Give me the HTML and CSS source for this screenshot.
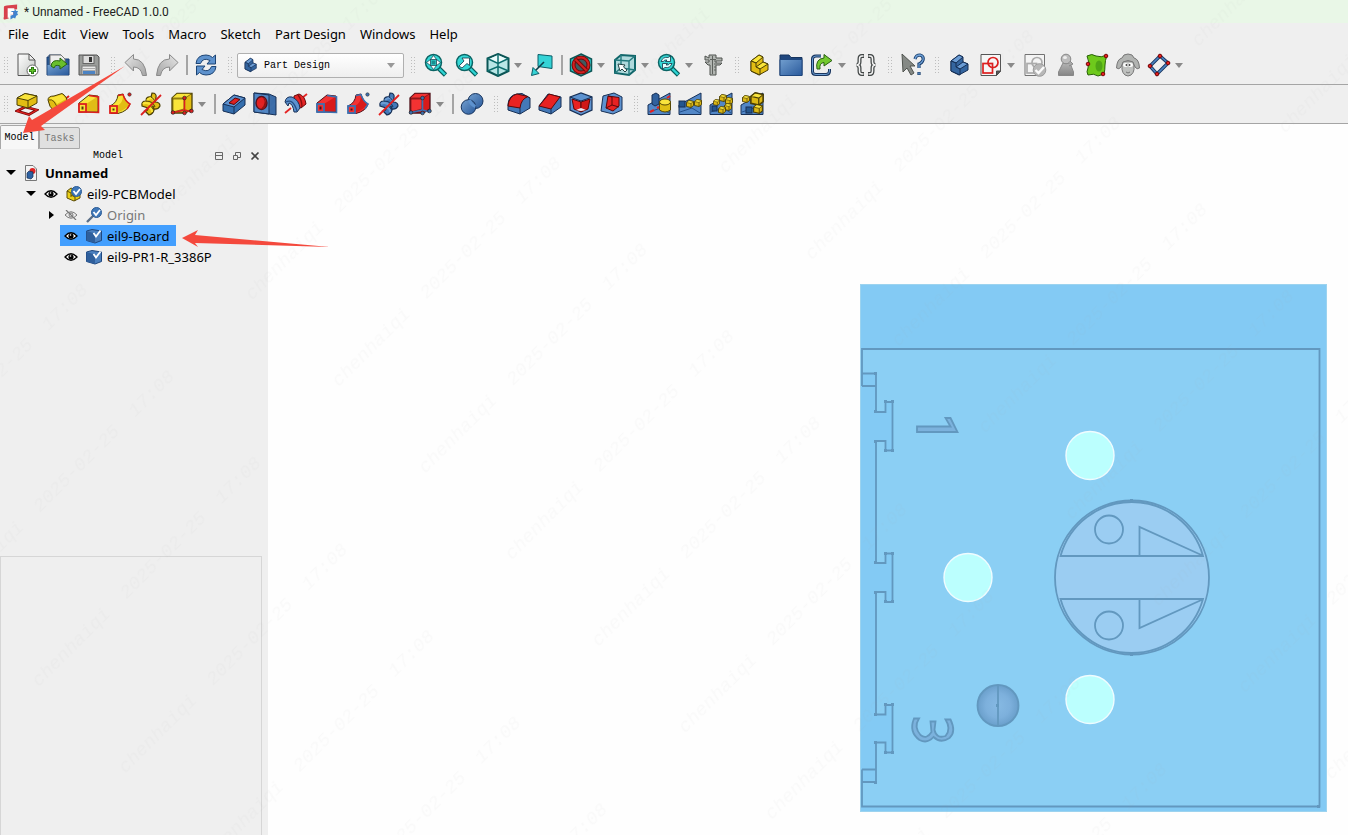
FILE: index.html
```html
<!DOCTYPE html>
<html lang="en">
<head>
<meta charset="utf-8">
<title>* Unnamed - FreeCAD 1.0.0</title>
<link rel="stylesheet" href="styles.css">
</head>
<body>
<svg class="defs" aria-hidden="true">
  <defs>
    <linearGradient id="gGrey" x1="0" y1="0" x2="1" y2="1"><stop offset="0" stop-color="#fff"/><stop offset="1" stop-color="#c4c7c4"/></linearGradient>
    <linearGradient id="gArrow" x1="0" y1="0" x2="1" y2="1"><stop offset="0" stop-color="#e6e6e6"/><stop offset="1" stop-color="#a4a4a4"/></linearGradient>
    <linearGradient id="gBlue" x1="0" y1="0" x2="1" y2="1"><stop offset="0" stop-color="#729fcf"/><stop offset="1" stop-color="#2a5a9c"/></linearGradient>
    <linearGradient id="gShade" x1="0" y1="0" x2="0" y2="1"><stop offset="0" stop-color="#b4b4b4"/><stop offset="1" stop-color="#858585"/></linearGradient>
    <radialGradient id="gKnob"><stop offset="0" stop-color="#86b9e3"/><stop offset=".6" stop-color="#7db0dc"/><stop offset="1" stop-color="#6a9fcb"/></radialGradient>
    <pattern id="watermark" width="424.26" height="122.47" patternUnits="userSpaceOnUse" patternTransform="translate(460 255) rotate(-45) translate(-212 -61)">
      <g class="watermark-text">
        <text x="84" y="69">chenhaiqi</text><text x="214" y="69">2025-02-25</text><text x="320" y="69">17:08</text>
      </g>
    </pattern>
  </defs>

  <symbol id="logo" viewBox="0 0 18 18"><path d="M2 4Q2 2 5 2L16 1V6L8 7V9L13 9V12L8 12L7 16L3 17Q1 17 2 14Z" fill="#d8414b"/><path d="M6 5H13V8H9V9H12V12H9V15H6Z" fill="#fff"/><path d="M14 6L15 8L17 8L16 10L17 12L15 13L14 16L12 15L9 17L9 13L12 12V9H10V8L13 8Z" fill="#3e83d0"/></symbol>
  <symbol id="new" viewBox="0 0 24 24"><path d="M3 1H14L20 7V22.500H3Z" fill="url(#gGrey)" stroke="#555"/><path d="M14 1V7H20Z" fill="#eee" stroke="#555"/><circle cx="17.500" cy="17.500" r="5.500" fill="#fff" stroke="#666"/><path d="M17.500 14V21M14 17.500H21" stroke="#256b12" stroke-width="3"/><path d="M17.500 14.700V20.300M14.700 17.500H20.300" stroke="#63c52a" stroke-width="1.300"/></symbol>
  <symbol id="open" viewBox="0 0 24 24"><path d="M1 4H3V2H15L19 6H23V22H1Z" fill="#2a5a94" stroke="#1c3f70"/><path d="M4 2H15L19 6V14H4Z" fill="#eee" stroke="#777"/><rect x="1.500" y="12" width="21" height="10" fill="url(#gBlue)"/><path d="M5 13Q6 6 14 8V5L21 11L14 16V13Q9 11 8 15Z" fill="#69bf2c" stroke="#28650f"/></symbol>
  <symbol id="save" viewBox="0 0 24 24"><path d="M2 2H20L22 4V22H2Z" fill="#9a9c9a" stroke="#555"/><rect x="6" y="2.500" width="11" height="8" fill="#dcdcdc" stroke="#666"/><rect x="12" y="4" width="3" height="5" fill="#333"/><rect x="5" y="13" width="14" height="8.500" fill="#e8e8e8" stroke="#777"/><path d="M6 15.500H18M6 17.500H18" stroke="#aaa"/><rect x="6" y="18" width="12" height="3" fill="#4c83c3"/></symbol>
  <symbol id="undo" viewBox="0 0 24 24"><path d="M1 9.500L9.500 1.500V6Q21 6 22.500 22.500H18.500Q17 14 9.500 14V18Z" fill="url(#gArrow)" stroke="#8a8a8a"/></symbol>
  <symbol id="refresh" viewBox="0 0 24 24"><path id="ref" d="M2 10.500Q3 2 12 2Q16 2 18.500 4.500L21.500 2V11H13L16 7.500Q9 4 6.500 10.500Z" fill="#5e92cd" stroke="#1c4474"/><use href="#ref" transform="rotate(180 12 12)"/></symbol>
  <symbol id="body" viewBox="0 0 24 24"><path d="M3 8L11 2L15 4V9L20 11V17L11 22L3 18Z" fill="var(--m)" stroke="var(--d)"/><path d="M3 8L11 2L15 4L8 10ZM8 14L15 9L20 11L12 16Z" fill="var(--f)" stroke="var(--d)"/><path d="M8 10V14L12 16V22L3 18V8Z" fill="var(--m)" stroke="var(--d)"/></symbol>
  <symbol id="lens" viewBox="0 0 24 24"><path d="M14.500 15L21.500 22" stroke="#07605f" stroke-width="4.600"/><path d="M15 15.500L21 21.500" stroke="#2fd5d4" stroke-width="2.400"/><circle cx="9.500" cy="9.500" r="8" fill="#35d8d6" stroke="#0a6464" stroke-width="1.500"/></symbol>
  <symbol id="fit" viewBox="0 0 24 24"><use href="#lens"/><path d="M9.500 2.500L12.500 6.500H6.500ZM9.500 16.500L12.500 12.500H6.500ZM2.500 9.500L6.500 6.500V12.500ZM16.500 9.500L12.500 6.500V12.500Z" fill="#fff" stroke="#134" stroke-width=".7"/><rect x="7.500" y="7.500" width="4" height="4" fill="#188f90"/></symbol>
  <symbol id="fitsel" viewBox="0 0 24 24"><use href="#lens"/><path d="M4 13L9 8L7 5H14.500V12.500L12 10.500L7 15Z" fill="#fff" stroke="#134" stroke-width=".8"/></symbol>
  <symbol id="zoomv" viewBox="0 0 24 24"><use href="#lens"/><path id="zv" d="M4 8.500Q6 3.500 11 4.500L13.500 3V8.500H8.500L10 7Q7 6.500 6.500 8.500Z" fill="#e6ffff" stroke="#134" stroke-width=".8"/><use href="#zv" transform="rotate(180 9.500 9.500)"/></symbol>
  <symbol id="iso" viewBox="0 0 24 24"><path d="M12 1L22.500 5.500V18L12 23L1.500 18V5.500Z" fill="#b9e6e6" stroke="#0b5555" stroke-width="2"/><path d="M12 2L21 6L12 10L3 6Z" fill="#e9fbfb"/><path d="M1.500 5.500L12 10.500L22.500 5.500M12 10.500V23M1.500 18L12 13.500L22.500 18M12 1V10" fill="none" stroke="#0c6d6d" stroke-width="1.500"/></symbol>
  <symbol id="align" viewBox="0 0 24 24"><path d="M8 1.500L22 3V15.500L8 13.500Z" fill="#35d3d6" stroke="#0b5c66"/><path d="M14 9L5 18" stroke="#0b3f4a" stroke-width="1.600"/><path d="M1.500 22.500L3 14.500L9 20.500Z" fill="#35d3d6" stroke="#0b5c66"/></symbol>
  <symbol id="nobox" viewBox="0 0 24 24"><path d="M12 1L22.500 6V18L12 23L1.500 18V6Z" fill="#2fcfd0" stroke="#0b5555" stroke-width="1.500"/><circle cx="12" cy="12" r="7.500" fill="#3d5c60" stroke="#730b0b" stroke-width="4"/><circle cx="12" cy="12" r="7.500" fill="none" stroke="#d42020" stroke-width="2"/><path d="M6.500 6.500L17.500 17.500" stroke="#730b0b" stroke-width="4"/><path d="M6.500 6.500L17.500 17.500" stroke="#d42020" stroke-width="2"/></symbol>
  <symbol id="cubesel" viewBox="0 0 24 24"><path d="M2 7L8 2L22 3V17L16 22L2 20Z" fill="#afd9dc" stroke="#11666a" stroke-width="2"/><path d="M2 7L16 8L22 3M16 8V22M8 2V15L2 20M8 15L22 17" fill="none" stroke="#247b7e" stroke-width="1.400"/><path d="M5 11L12 12L10.500 14L14 17L12 19L9 16L7 18Z" fill="#fff" stroke="#244"/></symbol>
  <symbol id="caliper" viewBox="0 0 24 24"><path d="M4 3L8 5V2H15V5H21V8H15V10H21L19 12H15V22H9V12H7L4 9H8V7H4Z" fill="#b2b6b2" stroke="#4f534f"/><path d="M11.500 3V21M13 8H15M13 11H15M13 14H15M13 17H15M9 6.500H15" stroke="#5e625e"/></symbol>
  <symbol id="folder" viewBox="0 0 24 24"><path d="M1 2H10L12 4.500H23V22.500H1Z" fill="#1f477e" stroke="#17345e"/><path d="M1 6.500H23V22.500H1Z" fill="url(#gBlue)" stroke="#1f477e"/></symbol>
  <symbol id="export" viewBox="0 0 24 24"><path d="M11 3H6Q2.500 3 2.500 6V18.500Q2.500 21.500 6 21.500H16Q19.500 21.500 19.500 18V16" fill="none" stroke="#17345e" stroke-width="3"/><path d="M11 3H6Q2.500 3 2.500 6V18.500Q2.500 21.500 6 21.500H16Q19.500 21.500 19.500 18V16" fill="none" stroke="#6a9bd0"/><path d="M7 16Q5 6 14 5V1.500L22 7.500L14 13V9.500Q9 10 10 16Z" fill="#72c92d" stroke="#275e0f"/></symbol>
  <symbol id="braces" viewBox="0 0 24 24"><g id="br" fill="none"><path d="M10 3H8Q5.500 3 5.500 6V9Q5.500 11.500 3 12Q5.500 12.500 5.500 15V18Q5.500 21 8 21H10" stroke="#3f4444" stroke-width="4"/><path d="M9.500 3H8Q5.500 3 5.500 6V9Q5.500 11.500 3 12Q5.500 12.500 5.500 15V18Q5.500 21 8 21H9.500" stroke="#f2f2f2" stroke-width="1.500"/></g><use href="#br" transform="matrix(-1 0 0 1 24 0)"/></symbol>
  <symbol id="whats" viewBox="0 0 24 24"><path d="M1 1L14 13H9L13 20L10 22L6 15L2 19Z" fill="#858985" stroke="#50544f"/><path d="M14 6Q15 2 19 2Q23 3 22 7Q21 10 18 11V15M18 19V22" fill="none" stroke="#173d6c" stroke-width="3.200"/><path d="M14 6Q15 2 19 2Q23 3 22 7Q21 10 18 11V15M18 19.500V21.500" fill="none" stroke="#6fa0d6" stroke-width="1.300"/></symbol>
  <symbol id="sketch" viewBox="0 0 24 24"><path d="M2 1.500H21.500V18L17.500 22.500H2Z" fill="#f6f6f6" stroke="#555"/><path d="M17.500 22.500V18H21.500Z" fill="#555" stroke="#444"/><rect x="4" y="10.500" width="9.500" height="9.500" fill="none" stroke="var(--g)" stroke-width="1.700"/><circle cx="14" cy="9.500" r="5" fill="none" stroke="var(--g)" stroke-width="1.700"/></symbol>
  <symbol id="validate" viewBox="0 0 24 24"><use href="#sketch"/><circle cx="16.500" cy="17" r="6.300" fill="#aaa" stroke="#888"/><path d="M12.500 17L15.500 20L21 14" fill="none" stroke="#fff" stroke-width="2.400"/></symbol>
  <symbol id="pawn" viewBox="0 0 24 24"><path d="M9 10H16L19.500 19V22.500H4.500V19Z" fill="url(#gShade)" stroke="#888"/><circle cx="12" cy="6" r="4.800" fill="#bcbcbc" stroke="#888"/><ellipse cx="11" cy="4.500" rx="2" ry="1.500" fill="#eee"/><path d="M16 8L19 11L15 13" fill="#aaa" stroke="#888"/></symbol>
  <symbol id="surface" viewBox="0 0 24 24"><path d="M2 3Q7 0 11 3Q16 5 22 2Q20 8 20 12Q20 17 19 21L13 23Q9 20 3 22Q1 19 3 15Q5 9 2 3Z" fill="#6ec91c" stroke="#286007"/><ellipse cx="14" cy="13" rx="3.500" ry="5.500" fill="#4fa516"/><g fill="#e32020" stroke="#7a0606"><circle cx="21" cy="3" r="1.800"/><circle cx="3" cy="11" r="1.800"/><circle cx="18" cy="21" r="1.800"/></g></symbol>
  <symbol id="sheep" viewBox="0 0 24 24"><path d="M7 8Q4 18 9 22Q12 24 15 22Q20 18 17 8Z" fill="#bfc1bf" stroke="#777"/><path d="M6 5Q7 1 12 1Q17 1 18 5Q23 6 23.500 15Q21 17 19 14L17 9Q12 6 7 9L5 14Q3 17 .5 15Q1 6 6 5Z" fill="#b2b4b2" stroke="#777"/><ellipse cx="9.500" cy="12" rx="2.500" ry="2" fill="#fff"/><ellipse cx="14.500" cy="12" rx="2.500" ry="2" fill="#fff"/><circle cx="10.500" cy="12" r="1" fill="#444"/><circle cx="13.500" cy="12" r="1" fill="#444"/><path d="M10 19Q12 21 14 19" fill="none" stroke="#777"/></symbol>
  <symbol id="diamond" viewBox="0 0 24 24"><path d="M13 3L21 10L10 21L3 13Z" fill="none" stroke="#17345e" stroke-width="3.400"/><path d="M13 3L21 10L10 21L3 13Z" fill="none" stroke="#4b83c2" stroke-width="1.600"/><g fill="#e32020" stroke="#7a0606"><circle cx="13" cy="3" r="1.800"/><circle cx="21" cy="10" r="1.800"/><circle cx="10" cy="21" r="1.800"/><circle cx="3" cy="13" r="1.800"/></g></symbol>

  <symbol id="pad" viewBox="0 0 24 24"><path d="M2 19L10 15L22 18L14 22.500Z" fill="none" stroke="#6f0a0a" stroke-width="2.600"/><path d="M2 19L10 15L22 18L14 22.500Z" fill="none" stroke="#e02020" stroke-width="1.200"/><path d="M2 6L10 1.500L22 4V11L13 16L2 13Z" fill="var(--m)" stroke="var(--d)"/><path d="M2 6L10 1.500L22 4L13 8.500Z" fill="var(--f)" stroke="var(--d)"/><path d="M13 8.500V16" stroke="var(--d)"/></symbol>
  <symbol id="revolve" viewBox="0 0 24 24"><path d="M1 22L23 4" stroke="var(--g)" stroke-width="2"/><path d="M2 8Q2 4 8 4L16 1.500Q21 4 22 12L13 19Q11 22 8 19Q3 15 2 8Z" fill="var(--m)" stroke="var(--d)"/><path d="M3 7Q4 4.500 8 5L16 2.500Q18 4 20 7L11 12Q8 7 3 7Z" fill="var(--f)"/><path d="M2.500 8Q9 6 12 19" fill="none" stroke="var(--d)" stroke-width=".8"/></symbol>
  <symbol id="loft" viewBox="0 0 24 24"><path d="M2 11L12 3L21 4V20H2Z" fill="var(--f)" stroke="var(--d)"/><path d="M9 12L20 5V19H9Z" fill="var(--m)"/><path d="M12 3.500L21.500 5V20.500L9 20" fill="none" stroke="var(--g)" stroke-width="1.600"/><rect x="2" y="12" width="7" height="8" fill="var(--f)" stroke="var(--g)" stroke-width="1.800"/><rect x="4.500" y="14.500" width="2" height="3" fill="var(--d)"/></symbol>
  <symbol id="pipe" viewBox="0 0 24 24"><path d="M2 14Q9 11 10 3L15 2Q17 10 22 12Q20 19 10 21.500H3Z" fill="var(--f)" stroke="var(--d)"/><path d="M9 14Q15 11 15 4Q17 9 21 12Q18 18 9 20.500Z" fill="var(--m)"/><path d="M10 3.500L15 2.500Q17 9 22 12L19 17" fill="none" stroke="var(--g)" stroke-width="1.500"/><rect x="2" y="14" width="7" height="7" fill="var(--f)" stroke="var(--g)" stroke-width="1.800"/><rect x="4.500" y="16.500" width="2" height="2" fill="var(--d)"/><circle cx="21.500" cy="2.500" r="1.700" fill="var(--g)" stroke="#333" stroke-width=".6"/></symbol>
  <symbol id="helix" viewBox="0 0 24 24"><path d="M13 1Q18 1 17 6L16 10Q21 10 21 14Q19 18 14 17L12 14Q15 13 15 18Q14 22 10 23L6 19Q9 19 9 16L3 14Q2 9 7 9Q7 4 12 5Z" fill="var(--m)" stroke="var(--d)" stroke-width="1.200"/><path d="M8 9Q9 6 13 6Q15 6 15 9M4 12Q8 9 13 14M10 16Q13 16 13 20" fill="none" stroke="var(--f)" stroke-width="2"/><path d="M7 9Q14 9 16 15M12 5Q15 6 16 10" fill="none" stroke="var(--d)"/><path d="M2 23L22 3" stroke="var(--g)" stroke-width="1.800"/></symbol>
  <symbol id="prim" viewBox="0 0 24 24"><path d="M2 6L7 1.500H22V17L15 21H2Z" fill="var(--m)" stroke="var(--d)" stroke-width="1.300"/><path d="M2 6L7 1.500H22L15 6ZM3 7H14V17L3 20Z" fill="var(--f)" stroke="var(--d)" stroke-width=".6"/><path d="M14.500 6V18L3 20.500M15 18L21 20" fill="none" stroke="var(--g)" stroke-width="1.600"/><g fill="var(--g)" stroke="#222" stroke-width=".7"><circle cx="14.500" cy="6" r="1.800"/><circle cx="3" cy="20.500" r="1.800"/><circle cx="14.500" cy="21" r="1.800"/><circle cx="21.500" cy="19" r="1.800"/></g></symbol>
  <symbol id="pocket" viewBox="0 0 24 24"><path d="M1 12L12 3L23 6V13L12 22L1 19Z" fill="#356ead" stroke="#162f55"/><path d="M1 12L12 3L23 6L12 15Z" fill="#5d92cf" stroke="#162f55"/><path d="M7 11L13 6L18 7.500L12 12.500Z" fill="#e02020" stroke="#560909"/><path d="M12 15V22" stroke="#162f55"/></symbol>
  <symbol id="hole" viewBox="0 0 24 24"><path d="M1 1L16 2L23 5V23L16 22L1 20Z" fill="#3b6ca8" stroke="#162f55"/><path d="M1 1L16 3V22L1 20Z" fill="#5186c4" stroke="#162f55"/><ellipse cx="8.500" cy="11" rx="5.500" ry="6.500" fill="#e42020" stroke="#54101d" stroke-width="1.400"/><path d="M10 6Q14 11 8 17Q13 18 13 11Q13 7 10 6Z" fill="#8f1010"/></symbol>
  <symbol id="groove" viewBox="0 0 24 24"><path d="M1 21L7 16M18 6L23 2" stroke="#e52525" stroke-width="1.800"/><path d="M10 4L15 2Q21 4 22 12L17 16L10 13Z" fill="#e52525" stroke="#650909"/><path d="M14 3Q18 8 18 15" fill="none" stroke="#8c0d0d" stroke-width="1.400"/><path d="M1 10Q2 4 8 5Q15 8 16 16L13 20H10Q9 12 5 11L4 14Z" fill="#5d92cf" stroke="#162f55"/><path d="M2 10Q9 6 13 19" fill="none" stroke="#264f86" stroke-width="1.300"/></symbol>
  <symbol id="boolean" viewBox="0 0 24 24"><circle cx="15.500" cy="9" r="7.500" fill="url(#gBlue)" stroke="#17345e"/><circle cx="8.500" cy="15" r="7.300" fill="url(#gBlue)" stroke="#17345e"/><path d="M9.500 8Q11 13 15.500 14.500" fill="none" stroke="#5d92cf" stroke-width="3"/></symbol>
  <symbol id="fillet" viewBox="0 0 24 24"><path d="M1 18V12Q2 3 10 2L15 1.500L23 6V16L13 22Z" fill="#4479b8" stroke="#162f55"/><path d="M1 14Q2 4 10 2L21 4.500Q14 7 13 16Z" fill="#e82222" stroke="#5c0808"/><path d="M13 16L13 22M21 5L23 6" stroke="#162f55"/></symbol>
  <symbol id="chamfer" viewBox="0 0 24 24"><path d="M1 18V14L10 2L23 5V15L13 22Z" fill="#4479b8" stroke="#162f55"/><path d="M1 14L11 2L22 5L13 17Z" fill="#e82222" stroke="#5c0808"/><path d="M13 17V22" stroke="#162f55"/></symbol>
  <symbol id="draft" viewBox="0 0 24 24"><path d="M1 5L12 1L23 5V18L12 23L1 18Z" fill="#5d92cf" stroke="#162f55" stroke-width="1.200"/><path d="M3 7L12 10V20L5 17Z" fill="#e82222" stroke="#5c0808"/><path d="M21 7L12 10V20L19 17Z" fill="#d01818" stroke="#5c0808"/><path d="M1 5L12 9L23 5" fill="none" stroke="#162f55"/><path d="M12 19L7 18L12 16L17 18Z" fill="#e8f0fc"/></symbol>
  <symbol id="thickness" viewBox="0 0 24 24"><path d="M3 4L14 1L22 5V18L13 22L1 19Z" fill="#5d92cf" stroke="#162f55"/><path d="M8 4L19 5.500V14L13 19L6 16Z" fill="#e82222" stroke="#5c0808"/><path d="M8 4L12 5V13L6 16M12 13L19 15" fill="none" stroke="#5c0808"/></symbol>
  <symbol id="wedge" viewBox="0 0 24 24"><path d="M1 13L23 1V22.500H1Z" fill="#5287c7" stroke="#162f55"/><path d="M2 20L14 16L22 21" fill="none" stroke="#23508c"/></symbol>
  <symbol id="ybox" viewBox="0 0 8 8"><path d="M.5 2.500L3 .5L7.500 1.500V5.500L5 7.500L.5 6.500Z" fill="#dcb814" stroke="#4b3f06" stroke-width=".9"/><path d="M.5 2.500L3 .5L7.500 1.500L5 3.500Z" fill="#fae43d" stroke="#4b3f06" stroke-width=".6"/><path d="M5 3.500V7.500" stroke="#4b3f06" stroke-width=".7"/></symbol>
  <symbol id="mirror" viewBox="0 0 24 24"><use href="#wedge"/><path d="M5 3L9 1L12 3V12L8 14L5 12Z" fill="#31619d" stroke="#162f55"/><path d="M12.500 10V18Q18 22 23.500 18V10Z" fill="#e0bf15" stroke="#554705"/><ellipse cx="18" cy="10" rx="5.500" ry="3" fill="#fae43d" stroke="#554705"/><path d="M3 20L7 18M10 16L12 15M20 6L23 4" stroke="#e52020" stroke-width="2"/></symbol>
  <symbol id="linear" viewBox="0 0 24 24"><use href="#wedge"/><rect x="1" y="9" width="6" height="6" fill="#24568f" stroke="#162f55"/><use href="#ybox" x="8" y="8" width="8" height="8"/><use href="#ybox" x="16" y="7" width="8" height="8"/></symbol>
  <symbol id="polar" viewBox="0 0 24 24"><use href="#wedge"/><use href="#ybox" x="4" y="7" width="7" height="7"/><use href="#ybox" x="10" y="2" width="8" height="8"/><use href="#ybox" x="16" y="5" width="8" height="8"/><use href="#ybox" x="15" y="11" width="8" height="8"/><use href="#ybox" x="9" y="14" width="8" height="8"/><rect x="3" y="14" width="5" height="5" fill="#24568f" stroke="#162f55"/></symbol>
  <symbol id="multi" viewBox="0 0 24 24"><use href="#wedge"/><use href="#ybox" x="10" y="0" width="14" height="14"/><use href="#ybox" x="2" y="3" width="8" height="8"/><use href="#ybox" x="13" y="12" width="10" height="10"/><rect x="6" y="15" width="6" height="6" fill="#24568f" stroke="#162f55"/></symbol>

  <symbol id="doc" viewBox="0 0 16 16"><path d="M2.500 .5H10L13.500 4V15.500H2.500Z" fill="#f4f4f4" stroke="#777"/><circle cx="9.500" cy="6" r="3" fill="#e02424"/><path d="M4 8L6 6L10 7V12L8 14L4 13Z" fill="#2f62a2" stroke="#162f55" stroke-width=".7"/></symbol>
  <symbol id="check" viewBox="0 0 16 16"><circle cx="10.500" cy="5.500" r="5" fill="#3f78b9" stroke="#2a5a94"/><path d="M7.500 5L10 8L14 3" fill="none" stroke="#fff" stroke-width="1.800"/></symbol>
  <symbol id="tpart" viewBox="0 0 16 16"><path d="M1 5L5 2L9 4V7L14 8V12L8 15L1 12Z" fill="#ead019" stroke="#5c4d06"/><path d="M5 9L9 11V15M1 5L5 7V11" fill="none" stroke="#5c4d06"/><use href="#check"/></symbol>
  <symbol id="torigin" viewBox="0 0 16 16"><path d="M1 15L7 9" stroke="#5a6f88" stroke-width="2.400"/><use href="#check"/></symbol>
  <symbol id="tsolid" viewBox="0 0 16 16"><path d="M.5 3L6 1.500L15.500 3V12.500L9 15L.5 12.500Z" fill="#4a7fbe" stroke="#1f477e"/><path d="M.5 3L9 5.500V15L.5 12.500Z" fill="#2f5f9c"/><path d="M7.500 5L10 8.500L14.500 2.500" fill="none" stroke="#fff" stroke-width="1.800"/></symbol>
  <symbol id="eye" viewBox="0 0 14 10"><path d="M1 5Q7-1.500 13 5Q7 11.500 1 5Z" fill="#fff" stroke="#000" stroke-width="1.300"/><circle cx="7" cy="5" r="2.600" fill="#000"/><circle cx="6.500" cy="4" r=".8" fill="#fff"/></symbol>
  <symbol id="eyeoff" viewBox="0 0 14 10"><path d="M1 5Q7-1.500 13 5Q7 11.500 1 5Z" fill="none" stroke="#777"/><circle cx="7" cy="5" r="2" fill="none" stroke="#777"/><path d="M2 0L12 10" stroke="#777" stroke-width="1.200"/></symbol>
</svg>

<div class="app">
  <header class="titlebar"><svg class="logo"><use href="#logo"/></svg><span>* Unnamed - FreeCAD 1.0.0</span></header>
  <nav class="menubar">
    <button>File</button><button>Edit</button><button>View</button><button>Tools</button><button>Macro</button><button>Sketch</button><button>Part Design</button><button>Windows</button><button>Help</button>
  </nav>

  <div class="toolbar" role="toolbar" aria-label="Main tools">
    <i class="grip"></i>
    <button class="tool" aria-label="New"><svg><use href="#new"/></svg></button>
    <button class="tool" aria-label="Open"><svg><use href="#open"/></svg></button>
    <button class="tool" aria-label="Save"><svg><use href="#save"/></svg></button>
    <i class="grip"></i>
    <button class="tool" aria-label="Undo"><svg><use href="#undo"/></svg></button>
    <button class="tool flip" aria-label="Redo"><svg><use href="#undo"/></svg></button>
    <i class="sep"></i>
    <button class="tool" aria-label="Refresh"><svg><use href="#refresh"/></svg></button>
    <i class="grip"></i>
    <label class="workbench"><svg class="blue"><use href="#body"/></svg><select aria-label="Workbench"><option>Part Design</option></select></label>
    <i class="grip"></i>
    <button class="tool" aria-label="Fit all"><svg><use href="#fit"/></svg></button>
    <button class="tool" aria-label="Fit selection"><svg><use href="#fitsel"/></svg></button>
    <button class="tool menu" aria-label="Isometric"><svg><use href="#iso"/></svg></button>
    <button class="tool" aria-label="Align to selection"><svg><use href="#align"/></svg></button>
    <i class="sep"></i>
    <button class="tool menu" aria-label="Draw style"><svg><use href="#nobox"/></svg></button>
    <button class="tool menu" aria-label="Bounding box"><svg><use href="#cubesel"/></svg></button>
    <button class="tool menu" aria-label="Sync view"><svg><use href="#zoomv"/></svg></button>
    <button class="tool" aria-label="Measure"><svg><use href="#caliper"/></svg></button>
    <i class="grip"></i>
    <button class="tool yellow" aria-label="Create part"><svg><use href="#body"/></svg></button>
    <button class="tool" aria-label="Create group"><svg><use href="#folder"/></svg></button>
    <button class="tool menu" aria-label="Make link"><svg><use href="#export"/></svg></button>
    <button class="tool" aria-label="Variable set"><svg><use href="#braces"/></svg></button>
    <i class="grip"></i>
    <button class="tool" aria-label="What's this?"><svg><use href="#whats"/></svg></button>
    <i class="grip"></i>
    <button class="tool blue" aria-label="Create body"><svg><use href="#body"/></svg></button>
    <button class="tool menu yellow" aria-label="Create sketch"><svg><use href="#sketch"/></svg></button>
    <button class="tool muted" aria-label="Validate sketch"><svg><use href="#validate"/></svg></button>
    <button class="tool" aria-label="Check geometry"><svg><use href="#pawn"/></svg></button>
    <button class="tool" aria-label="Shape binder"><svg><use href="#surface"/></svg></button>
    <button class="tool" aria-label="Clone"><svg><use href="#sheep"/></svg></button>
    <button class="tool menu" aria-label="Datum"><svg><use href="#diamond"/></svg></button>
  </div>

  <div class="toolbar" role="toolbar" aria-label="Part Design tools">
    <i class="grip"></i>
    <button class="tool yellow" aria-label="Pad"><svg><use href="#pad"/></svg></button>
    <button class="tool yellow" aria-label="Revolution"><svg><use href="#revolve"/></svg></button>
    <button class="tool yellow" aria-label="Additive loft"><svg><use href="#loft"/></svg></button>
    <button class="tool yellow" aria-label="Additive pipe"><svg><use href="#pipe"/></svg></button>
    <button class="tool yellow" aria-label="Additive helix"><svg><use href="#helix"/></svg></button>
    <button class="tool yellow menu" aria-label="Additive primitive"><svg><use href="#prim"/></svg></button>
    <i class="sep"></i>
    <button class="tool" aria-label="Pocket"><svg><use href="#pocket"/></svg></button>
    <button class="tool" aria-label="Hole"><svg><use href="#hole"/></svg></button>
    <button class="tool" aria-label="Groove"><svg><use href="#groove"/></svg></button>
    <button class="tool red" aria-label="Subtractive loft"><svg><use href="#loft"/></svg></button>
    <button class="tool red" aria-label="Subtractive pipe"><svg><use href="#pipe"/></svg></button>
    <button class="tool bluered" aria-label="Subtractive helix"><svg><use href="#helix"/></svg></button>
    <button class="tool red menu" aria-label="Subtractive primitive"><svg><use href="#prim"/></svg></button>
    <i class="sep"></i>
    <button class="tool" aria-label="Boolean"><svg><use href="#boolean"/></svg></button>
    <i class="grip"></i>
    <button class="tool" aria-label="Fillet"><svg><use href="#fillet"/></svg></button>
    <button class="tool" aria-label="Chamfer"><svg><use href="#chamfer"/></svg></button>
    <button class="tool" aria-label="Draft"><svg><use href="#draft"/></svg></button>
    <button class="tool" aria-label="Thickness"><svg><use href="#thickness"/></svg></button>
    <i class="grip"></i>
    <button class="tool" aria-label="Mirrored"><svg><use href="#mirror"/></svg></button>
    <button class="tool" aria-label="Linear pattern"><svg><use href="#linear"/></svg></button>
    <button class="tool" aria-label="Polar pattern"><svg><use href="#polar"/></svg></button>
    <button class="tool" aria-label="MultiTransform"><svg><use href="#multi"/></svg></button>
  </div>

  <div class="work">
    <aside class="side">
      <div class="tabs" role="tablist"><button class="tab active" role="tab">Model</button><button class="tab" role="tab">Tasks</button></div>
      <div class="dock-title">
        <span class="dock-name">Model</span>
        <button aria-label="Collapse"><svg viewBox="0 0 10 10"><path d="M1.500 1.500H8.500V8.500H1.500ZM1.500 4.500H8.500" fill="none" stroke="#666"/></svg></button>
        <button aria-label="Float"><svg viewBox="0 0 10 10"><path d="M1.500 4.500H5.500V8.500H1.500ZM3.500 4V1.500H8.500V6.500H6" fill="none" stroke="#666"/></svg></button>
        <button aria-label="Close"><svg viewBox="0 0 10 10"><path d="M1.500 1.500L8.500 8.500M8.500 1.500L1.500 8.500" stroke="#444" stroke-width="1.700"/></svg></button>
      </div>
      <ul class="tree">
        <li class="row l0"><i class="twist open"></i><svg class="ic"><use href="#doc"/></svg><b>Unnamed</b></li>
        <li class="row l1"><i class="twist open"></i><svg class="eye"><use href="#eye"/></svg><svg class="ic"><use href="#tpart"/></svg><span>eil9-PCBModel</span></li>
        <li class="row l2 dim"><i class="twist"></i><svg class="eye"><use href="#eyeoff"/></svg><svg class="ic"><use href="#torigin"/></svg><span>Origin</span></li>
        <li class="row l3 selected"><svg class="eye"><use href="#eye"/></svg><svg class="ic"><use href="#tsolid"/></svg><span>eil9-Board</span></li>
        <li class="row l3"><svg class="eye"><use href="#eye"/></svg><svg class="ic"><use href="#tsolid"/></svg><span>eil9-PR1-R_3386P</span></li>
      </ul>
      <section class="properties" aria-label="Properties"></section>
    </aside>
    <main class="viewport">
      <svg class="model" viewBox="861 284 467 528" role="img" aria-label="PCB board, top view">
        <rect x="861" y="284" width="467" height="528" fill="#83caf4"/>
        <rect x="861.500" y="284.500" width="466" height="527" fill="none" stroke="#9cd3ef"/>
        <path d="M863 349H1321V806.500H863V782H877.500V742.500H887V752.500H894V705H887V714.500H877.500V592H887V602H894V553.500H887V563H877.500V441H887V450.500H894V402H887V412H877.500V373.500H863Z" fill="#8bcff4"/>
        <g fill="none" stroke="#6298bf" stroke-width="1.800">
          <path d="M863 386V349H1320.500V806.500H863V769.500"/>
          <path d="M863 373.500H877V412H886.500V402H893.500V450.500H886.500V441H877V563H886.500V553.500H893.500V602H886.500V592H877V714.500H886.500V705H893.500V752.500H886.500V742.500H877V782M863 386H877M863 769.500H877M863 782H877"/>
          <path d="M918 426.500H951.500L946.500 418H951.500L958.500 432H918Z" fill="#7cb2dd"/>
          <path d="M915 718.500H920Q914.500 727 921.500 735Q927.500 740 932.500 732L931.500 721.500H936.500L935.500 730Q937.500 739 946.500 736Q952.500 729 946.500 719.500H951.500Q957.500 732 950.500 738Q941.500 744 934.500 737Q928.500 744 920.500 740Q909.500 732 915 718.500Z" fill="#7cb2dd"/>
          <circle cx="1133" cy="577.500" r="77" fill="#9bcdf2"/>
          <path d="M1061.500 556A74 74 0 0 1 1204 556ZM1061.500 599A74 74 0 0 0 1204 599ZM1140.500 556V527L1203.500 555.500M1140.500 599V628L1203.500 599.500"/>
          <circle cx="1110" cy="529.500" r="14"/><circle cx="1110" cy="625.500" r="14"/>
          <circle cx="999" cy="705.500" r="20.500" fill="url(#gKnob)"/><path d="M999 685V726"/>
        </g>
        <path d="M885 400h3v3h-3zM892 400h3v3h-3zM892 449h3v3h-3zM885 449h3v3h-3zM885 552h3v3h-3zM892 552h3v3h-3zM892 600h3v3h-3zM885 600h3v3h-3zM885 703h3v3h-3zM892 703h3v3h-3zM892 751h3v3h-3zM885 751h3v3h-3zM875 372h3v3h-3zM875 781h3v3h-3zM1131 499h3v4h-3zM1131 652h3v4h-3zM1318 805h3v3h-3zM997 704h3v3h-3zM875 410h3v3h-3zM875 440h3v3h-3zM875 561h3v3h-3zM875 591h3v3h-3zM875 713h3v3h-3zM875 741h3v3h-3z" fill="#6298bf"/>
        <g fill="#bbfffe" stroke="#effcff" stroke-width="1.400"><circle cx="1091" cy="455.500" r="24"/><circle cx="969" cy="577.500" r="24"/><circle cx="1091" cy="699.500" r="24"/></g>
      </svg>
    </main>
  </div>
</div>

<svg class="overlay" aria-hidden="true">
  <rect width="100%" height="100%" fill="url(#watermark)"/>
  <path d="M23 133L29 116L32 120L125 66L41 126L45 130Z" fill="#f4493d"/>
  <path d="M182 238L198 230L195 235L330 247L195 243L198 247Z" fill="#f4493d"/>
</svg>
</body>
</html>
```
FILE: styles.css
```css
* { box-sizing: border-box; }

body {
  margin: 0;
  background: #efefef;
  color: #000;
  font-family: "Noto Sans", "Open Sans", sans-serif;
  font-size: 13px;
}

button {
  border: 0;
  padding: 0;
  background: none;
  color: inherit;
  font: inherit;
}

.defs { position: absolute; width: 0; height: 0; }

.app { display: flex; flex-direction: column; min-height: 100vh; }

.titlebar {
  display: flex;
  align-items: center;
  gap: 5px;
  height: 23px;
  padding-left: 2px;
  background: #e9f7e7;
  color: #222;
  font-family: Roboto, "Noto Sans", sans-serif;
  font-size: 12px;
}
.logo { width: 17px; height: 18px; }

.menubar { display: flex; gap: 14px; height: 23px; padding: 0 0 2px 8px; align-items: center; }

.toolbar {
  display: flex;
  align-items: center;
  height: 39px;
  border-bottom: 1px solid #a5a5a5;
}
.toolbar > * { flex: none; }

.grip {
  width: 16px;
  height: 19px;
  padding: 0 4px 0 6px;
  background: radial-gradient(circle, #bdbdbd 1px, transparent 1px) 0 0 / 3px 3px;
  background-clip: content-box;
}
.grip:first-child { width: 11px; padding: 0 1px 0 4px; }

.sep { width: 2px; height: 20px; margin: 0 2px 0 4px; background: #a5a5a5; }

.tool { display: flex; align-items: center; width: 31px; height: 31px; padding-left: 4px; }
.tool svg { width: 24px; height: 24px; flex: none; }
.flip svg { transform: scaleX(-1); }
.menu { width: 44px; gap: 4px; }
.menu::after {
  content: "";
  border: 4px solid transparent;
  border-top: 5px solid #898989;
  border-bottom: 0;
}

.yellow { --f: #f9e43a; --m: #e2bd13; --d: #4b3f06; --g: #dc1f1f; }
.red { --f: #f33232; --m: #d91a1a; --d: #4f1018; --g: #3c71b1; }
.blue { --f: #6b9cd4; --m: #34659f; --d: #162f55; }
.bluered { --f: #6b9cd4; --m: #4479b8; --d: #162f55; --g: #e52020; }
.muted { --g: #9b9b9b; opacity: .8; }

.workbench {
  display: flex;
  align-items: center;
  gap: 5px;
  width: 167px;
  height: 25px;
  padding: 0 8px 0 5px;
  border: 1px solid #b0b0b0;
  border-radius: 2px;
  background: linear-gradient(#fff, #efefef);
}
.workbench svg { width: 16px; height: 16px; }
.workbench select {
  flex: 1;
  appearance: none;
  border: 0;
  background: none;
  color: #000;
  font: 10px "Liberation Mono", monospace;
}
.workbench::after {
  content: "";
  border: 4px solid transparent;
  border-top: 5px solid #999;
  border-bottom: 0;
}

.work { display: flex; flex: 1; }

.side { display: flex; flex-direction: column; width: 268px; padding-top: 1px; }

.tabs { display: flex; align-items: flex-end; font: 10px "Liberation Mono", monospace; }
.tab {
  width: 41px;
  height: 22px;
  border: 1px solid #a8a8a8;
  border-radius: 2px 2px 0 0;
  background: #e0e0e0;
  color: #777;
}
.tab.active {
  width: 39px;
  height: 24px;
  border-bottom: 0;
  background: #f7f7f7;
  color: #000;
}

.dock-title {
  display: flex;
  align-items: center;
  gap: 8px;
  height: 13px;
  padding: 0 8px 0 10px;
  font: 10px "Liberation Mono", monospace;
}
.dock-title button { display: flex; width: 10px; height: 10px; }
.dock-title svg { width: 10px; height: 10px; }
.dock-name { flex: 1; text-align: center; }

.tree { flex: 394; margin: 0; padding: 0; list-style: none; }
.row { display: flex; align-items: center; width: max-content; height: 21px; white-space: nowrap; }
.row .ic { width: 16px; height: 16px; margin-right: 5px; }
.row .eye { width: 14px; height: 10px; margin-right: 8px; }
.l0 { padding-left: 6px; }
.l0 .ic { margin-right: 6px; }
.l1 { padding-left: 26px; }
.l2 { padding-left: 46px; }
.l3 { margin-left: 60px; padding: 0 7px 0 4px; }
.dim { color: #777; }
.selected { background: #439ffe; }

.twist { width: 10px; margin-right: 8px; display: flex; justify-content: center; }
.l0 .twist { margin-right: 7px; }
.twist::after {
  content: "";
  border: 4px solid transparent;
  border-left: 5px solid #000;
  border-right: 0;
}
.twist.open::after {
  border: 5px solid transparent;
  border-top: 5px solid #000;
  border-bottom: 0;
}

.properties {
  flex: 278;
  margin-right: 6px;
  border: 1px solid #d6d6d6;
  border-bottom: 0;
}

.viewport {
  display: flex;
  flex: 1;
  align-items: flex-end;
  justify-content: flex-end;
  padding: 0 21px 23px 0;
  background: #fefefe;
}
.model { width: 467px; height: 528px; }

.overlay { position: absolute; top: 0; left: 0; width: 100%; height: 100%; pointer-events: none; }
.watermark-text {
  font: italic 19px "Liberation Mono", monospace;
  text-anchor: middle;
  fill: #999;
  fill-opacity: .05;
}
```
